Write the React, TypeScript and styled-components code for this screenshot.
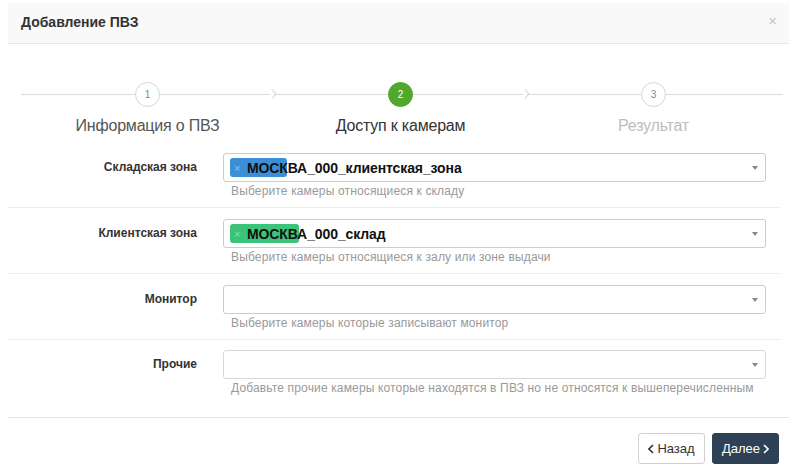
import React from "react";
import styled, { createGlobalStyle, css } from "styled-components";

const GlobalStyle = createGlobalStyle`
  html, body {
    margin: 0;
    padding: 0;
    background: #ffffff;
    font-family: "Liberation Sans", Arial, sans-serif;
  }
  * { box-sizing: border-box; }
`;

const Modal = styled.div`
  margin: 3px 0 0 8px;
  width: 781px;
  background: #fff;
`;

const Header = styled.div`
  height: 41px;
  background: #f9f9f9;
  border-bottom: 1px solid #e5e5e5;
  display: flex;
  align-items: center;
  justify-content: space-between;
  padding: 0 12px 2px 13px;
`;

const Title = styled.h4`
  margin: 0;
  font-size: 14px;
  font-weight: bold;
  color: #333;
`;

const Close = styled.span`
  font-size: 15px;
  color: #c4c4c4;
  line-height: 1;
  margin-top: -4px;
`;

const Steps = styled.div`
  display: grid;
  grid-template-columns: repeat(3, 253px);
  padding: 38px 0 0 13px;
  height: 98px;
`;

type StepState = "done" | "active" | "todo";

const Step = styled.div<{ $last?: boolean }>`
  position: relative;
  display: flex;
  flex-direction: column;
  align-items: center;
  &::before {
    content: "";
    position: absolute;
    top: 12px;
    left: 0;
    right: ${(p) => (p.$last ? "-3px" : "0")};
    height: 1px;
    background: #dcdcdc;
  }
`;

const Chevron = styled.svg`
  position: absolute;
  right: -4px;
  top: 6px;
  background: #fff;
`;

const Circle = styled.div<{ $state: StepState }>`
  position: relative;
  z-index: 1;
  width: 25px;
  height: 25px;
  border-radius: 50%;
  display: flex;
  align-items: center;
  justify-content: center;
  font-size: 10px;
  ${(p) =>
    p.$state === "active"
      ? css`
          background: #52a82a;
          color: #fff;
          border: 1px solid #52a82a;
        `
      : css`
          background: #fff;
          color: #6f8cb0;
          border: 1px solid #d6d6d6;
        `}
`;

const StepLabel = styled.div<{ $state: StepState }>`
  margin-top: 9px;
  font-size: 16px;
  line-height: 20px;
  letter-spacing: -0.2px;
  color: ${(p) =>
    p.$state === "active" ? "#333" : p.$state === "done" ? "#555" : "#bdbdbd"};
`;

const Row = styled.div<{ $last?: boolean }>`
  display: grid;
  grid-template-columns: 189px 543px;
  column-gap: 26px;
  padding: ${(p) => (p.$last ? "10px 0 22px" : "11px 0 9px")};
  margin-right: 9px;
  border-bottom: ${(p) => (p.$last ? "none" : "1px solid #ececec")};
`;

const Label = styled.label`
  grid-row: 1;
  text-align: right;
  font-size: 12px;
  font-weight: bold;
  color: #333;
  line-height: 29px;
`;

const Select = styled.div<{ $faint?: boolean }>`
  position: relative;
  height: 29px;
  border: 1px solid ${(p) => (p.$faint ? "#d8d8d8" : "#cccccc")};
  border-radius: 3px;
  display: flex;
  align-items: center;
  padding: 0 6px;
  &::after {
    content: "";
    position: absolute;
    right: 7px;
    top: 12px;
    border-left: 3.5px solid transparent;
    border-right: 3.5px solid transparent;
    border-top: 4px solid #888;
  }
`;

const Tag = styled.span<{ $width: number; $bg: string }>`
  display: inline-flex;
  align-items: center;
  height: 19px;
  width: ${(p) => p.$width}px;
  margin-right: ${(p) => 17 - p.$width}px;
  background: ${(p) => p.$bg};
  border-radius: 3px;
  padding-left: 4px;
  font-size: 11px;
  color: rgba(255, 255, 255, 0.45);
`;

const TagText = styled.span`
  position: relative;
  font-size: 14px;
  font-weight: bold;
  letter-spacing: -0.1px;
  color: #111;
`;

const Help = styled.div`
  grid-column: 2;
  margin-top: 2px;
  font-size: 12px;
  line-height: 14px;
  letter-spacing: 0.15px;
  color: #999;
  padding-left: 8px;
`;

const Footer = styled.div`
  border-top: 1px solid #e5e5e5;
  display: flex;
  justify-content: flex-end;
  gap: 7px;
  padding: 15px 10px 0 0;
`;

const Button = styled.button<{ $primary?: boolean }>`
  height: 31px;
  width: 67px;
  border-radius: 3px;
  font-family: "Liberation Sans", Arial, sans-serif;
  font-size: 13px;
  display: flex;
  align-items: center;
  justify-content: center;
  gap: 3px;
  cursor: pointer;
  ${(p) =>
    p.$primary
      ? css`
          background: #2f4156;
          border: 1px solid #2f4156;
          color: #fff;
        `
      : css`
          background: #fff;
          border: 1px solid #d0d0d0;
          color: #333;
        `}
`;

const Arrow = ({ dir }: { dir: "left" | "right" }) => (
  <svg width="6" height="10" viewBox="0 0 6 10">
    <path
      d={dir === "left" ? "M5 1 L1 5 L5 9" : "M1 1 L5 5 L1 9"}
      fill="none"
      stroke="currentColor"
      strokeWidth="1.6"
    />
  </svg>
);

const steps: { n: number; label: string; state: StepState }[] = [
  { n: 1, label: "Информация о ПВЗ", state: "done" },
  { n: 2, label: "Доступ к камерам", state: "active" },
  { n: 3, label: "Результат", state: "todo" },
];

const rows: {
  label: string;
  help: string;
  tag?: { bg: string; width: number; text: string };
}[] = [
  {
    label: "Складская зона",
    help: "Выберите камеры относящиеся к складу",
    tag: { bg: "#3a8fd6", width: 57, text: "МОСКВА_000_клиентская_зона" },
  },
  {
    label: "Клиентская зона",
    help: "Выберите камеры относящиеся к залу или зоне выдачи",
    tag: { bg: "#3cc37a", width: 69, text: "МОСКВА_000_склад" },
  },
  { label: "Монитор", help: "Выберите камеры которые записывают монитор" },
  {
    label: "Прочие",
    help: "Добавьте прочие камеры которые находятся в ПВЗ но не относятся к вышеперечисленным",
  },
];

export default function App() {
  return (
    <>
      <GlobalStyle />
      <Modal>
        <Header>
          <Title>Добавление ПВЗ</Title>
          <Close>×</Close>
        </Header>
        <Steps>
          {steps.map((s, i) => (
            <Step key={s.n} $last={i === steps.length - 1}>
              <Circle $state={s.state}>{s.n}</Circle>
              <StepLabel $state={s.state}>{s.label}</StepLabel>
              {i < steps.length - 1 && (
                <Chevron width="8" height="12" viewBox="0 0 8 12">
                  <path d="M2 1.5 L6 6 L2 10.5" fill="none" stroke="#c8c8c8" strokeWidth="1" />
                </Chevron>
              )}
            </Step>
          ))}
        </Steps>
        {rows.map((r, i) => (
          <Row key={r.label} $last={i === rows.length - 1}>
            <Label>{r.label}</Label>
            <Select $faint={i === rows.length - 1}>
              {r.tag && (
                <>
                  <Tag $bg={r.tag.bg} $width={r.tag.width}>
                    ×
                  </Tag>
                  <TagText>{r.tag.text}</TagText>
                </>
              )}
            </Select>
            <Help>{r.help}</Help>
          </Row>
        ))}
        <Footer>
          <Button>
            <Arrow dir="left" />
            Назад
          </Button>
          <Button $primary>
            Далее
            <Arrow dir="right" />
          </Button>
        </Footer>
      </Modal>
    </>
  );
}
